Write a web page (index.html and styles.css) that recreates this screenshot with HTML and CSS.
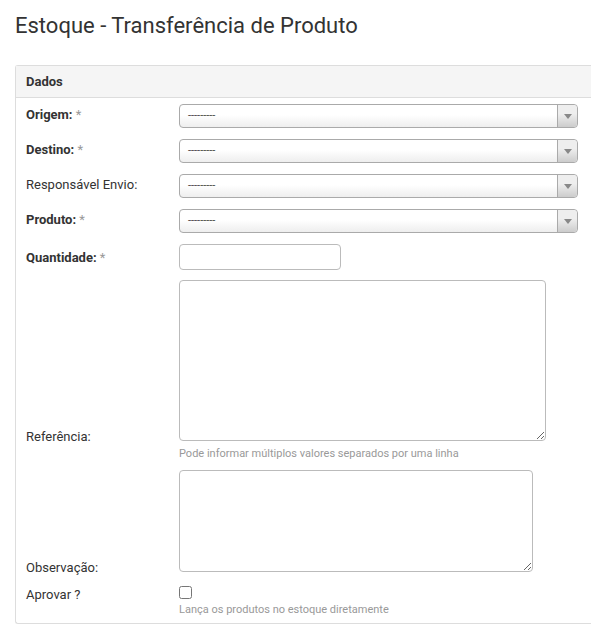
FILE: index.html
```html
<!DOCTYPE html>
<html lang="pt-BR">
<head>
    <meta charset="UTF-8">
    <meta name="viewport" content="width=device-width, initial-scale=1.0">
    <title>Estoque - Transferência de Produto</title>
    <link rel="stylesheet" href="styles.css">
</head>
<body>
    <div class="page">
        <h1>Estoque - Transferência de Produto</h1>

        <div class="panel">
            <div class="panel-heading">Dados</div>
            <table class="form-table">
                <tr>
                    <th class="required">Origem: <span class="star">*</span></th>
                    <td>
                        <div class="select2-choice">
                            <span>---------</span>
                            <b></b>
                        </div>
                    </td>
                </tr>
                <tr>
                    <th class="required">Destino: <span class="star">*</span></th>
                    <td>
                        <div class="select2-choice">
                            <span>---------</span>
                            <b></b>
                        </div>
                    </td>
                </tr>
                <tr>
                    <th>Responsável Envio:</th>
                    <td>
                        <div class="select2-choice">
                            <span>---------</span>
                            <b></b>
                        </div>
                    </td>
                </tr>
                <tr>
                    <th class="required">Produto: <span class="star">*</span></th>
                    <td>
                        <div class="select2-choice">
                            <span>---------</span>
                            <b></b>
                        </div>
                    </td>
                </tr>
                <tr>
                    <th class="required">Quantidade: <span class="star">*</span></th>
                    <td><input type="text" class="input-qtd"></td>
                </tr>
                <tr class="row-ref">
                    <th>Referência:</th>
                    <td>
                        <textarea class="text-ref"></textarea>
                        <div class="help">Pode informar múltiplos valores separados por uma linha</div>
                    </td>
                </tr>
                <tr class="row-obs">
                    <th>Observação:</th>
                    <td><textarea class="text-obs"></textarea></td>
                </tr>
                <tr>
                    <th>Aprovar ?</th>
                    <td>
                        <input type="checkbox" class="check">
                        <div class="help help-check">Lança os produtos no estoque diretamente</div>
                    </td>
                </tr>
            </table>
        </div>
    </div>
</body>
</html>
```

FILE: styles.css
```css
html {
    overflow-x: hidden;
}
body {
    font-family: Roboto, "Liberation Sans", sans-serif;
    font-size: 13px;
    color: #333;
    margin: 0;
    background: #fff;
}
.page {
    padding: 14px 0 0 15px;
}
h1 {
    font-size: 22px;
    font-weight: 400;
    line-height: 24px;
    margin: 0 0 27px 0;
    color: #333;
}
.panel {
    border: 1px solid #ddd;
    border-right: none;
    border-radius: 3px 0 0 3px;
}
.panel-heading {
    background: #f5f5f5;
    border-bottom: 1px solid #ddd;
    padding: 8px 10px;
    line-height: 15px;
    font-weight: 700;
}
.form-table {
    border-collapse: collapse;
}
.form-table th {
    width: 153px;
    text-align: left;
    font-weight: 400;
    padding: 5px 0 6px 10px;
    vertical-align: baseline;
    line-height: 18px;
    white-space: nowrap;
}
.form-table th.required {
    font-weight: 700;
}
.star {
    color: #999;
    font-weight: 400;
}
.form-table td {
    padding: 5px 0 6px 0;
    vertical-align: baseline;
}
.form-table tr:first-child th,
.form-table tr:first-child td {
    padding-top: 6px;
}
.form-table .row-ref th,
.form-table .row-ref td {
    padding-top: 4px;
}
.form-table .row-obs th,
.form-table .row-obs td {
    padding-top: 3px;
    padding-bottom: 4px;
}
.select2-choice {
    position: relative;
    width: 389px;
    height: 22px;
    line-height: 22px;
    border: 1px solid #aaa;
    border-radius: 4px;
    background: linear-gradient(to top, #eee 0%, #fff 55%);
    font-size: 11px;
    color: #444;
    padding-left: 8px;
}
.select2-choice b {
    position: absolute;
    top: 0;
    right: 0;
    width: 19px;
    height: 22px;
    border-left: 1px solid #aaa;
    border-radius: 0 4px 4px 0;
    background: linear-gradient(to top, #ccc 0%, #eee 60%);
}
.select2-choice b::after {
    content: "";
    position: absolute;
    left: 6px;
    top: 9px;
    border-left: 4px solid transparent;
    border-right: 4px solid transparent;
    border-top: 5px solid #888;
}
.input-qtd {
    width: 162px;
    height: 26px;
    box-sizing: border-box;
    border: 1px solid #bbb;
    border-radius: 4px;
    margin: 0;
    padding: 2px 6px;
    font-family: inherit;
}
textarea {
    border: 1px solid #bbb;
    border-radius: 4px;
    margin: 0;
    box-sizing: border-box;
    font-family: inherit;
    vertical-align: baseline;
}
.text-ref {
    width: 367px;
    height: 161px;
}
.text-obs {
    width: 354px;
    height: 102px;
}
.help {
    font-size: 11px;
    color: #999;
    line-height: 14px;
    margin-top: 3px;
}
.help-check {
    margin-top: 1px;
}
.check {
    margin: 0;
    width: 13px;
    height: 13px;
}
```
